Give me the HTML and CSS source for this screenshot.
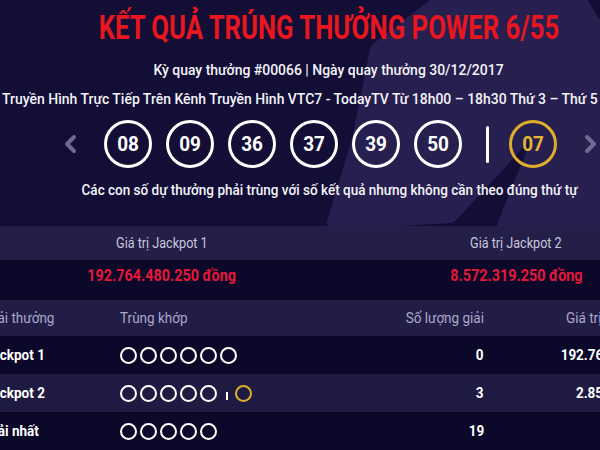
FILE: index.html
```html
<!DOCTYPE html>
<html lang="vi">
<head>
<meta charset="utf-8">
<title>Kết quả Power 6/55</title>
<link rel="stylesheet" href="styles.css">
</head>
<body>
<svg class="bg" viewBox="0 0 600 226" width="600" height="226" aria-hidden="true">
  <polygon class="bg-shape" points="443,0 578,0 600,35 600,226 505,226 555,102 450,215 335,222 360,140 378,50"/>
</svg>
<main class="page">
  <section class="hero">
    <h1 class="title line"><span class="c">KẾT QUẢ TRÚNG THƯỞNG POWER 6/55</span></h1>
    <p class="meta line"><span class="c">Kỳ quay thưởng #00066 | Ngày quay thưởng 30/12/2017</span></p>
    <p class="meta line meta-wide"><span class="c">Truyền Hình Trực Tiếp Trên Kênh Truyền Hình VTC7 - TodayTV Từ 18h00 – 18h30 Thứ 3 – Thứ 5</span></p>
    <div class="draw">
      <svg class="chev chev-left" viewBox="0 0 14 20" width="14" height="20"><polyline points="11,3 4,10 11,17"/></svg>
      <div class="balls">
        <div class="ball"><span class="c">08</span></div>
        <div class="ball"><span class="c">09</span></div>
        <div class="ball"><span class="c">36</span></div>
        <div class="ball"><span class="c">37</span></div>
        <div class="ball"><span class="c">39</span></div>
        <div class="ball"><span class="c">50</span></div>
      </div>
      <div class="sep"></div>
      <div class="ball gold"><span class="c">07</span></div>
      <svg class="chev chev-right" viewBox="0 0 14 20" width="14" height="20"><polyline points="3,3 10,10 3,17"/></svg>
    </div>
    <p class="meta line note"><span class="c">Các con số dự thưởng phải trùng với số kết quả nhưng không cần theo đúng thứ tự</span></p>
  </section>

  <section class="lower">
    <div class="jackpots">
      <div class="jp-head"><span class="c">Giá trị Jackpot 1</span></div>
      <div class="jp-head"><span class="c">Giá trị Jackpot 2</span></div>
      <div class="jp-val"><span class="c">192.764.480.250 đồng</span></div>
      <div class="jp-val"><span class="c">8.572.319.250 đồng</span></div>
    </div>

    <div class="prizes">
      <div class="ph"><span class="c">Giải thưởng</span></div>
      <div class="ph"><span class="c">Trùng khớp</span></div>
      <div class="ph right"><span class="c cr">Số lượng giải</span></div>
      <div class="ph val-head"><span class="c">Giá trị giải</span></div>

      <div class="pr"><span class="c">Jackpot 1</span></div>
      <div class="pr">
        <div class="dots"><i class="dot"></i><i class="dot"></i><i class="dot"></i><i class="dot"></i><i class="dot"></i><i class="dot"></i></div>
      </div>
      <div class="pr right"><span class="c cr">0</span></div>
      <div class="pr right"><span class="c cr">192.764.480.250</span></div>

      <div class="pr alt"><span class="c">Jackpot 2</span></div>
      <div class="pr alt">
        <div class="dots"><i class="dot"></i><i class="dot"></i><i class="dot"></i><i class="dot"></i><i class="dot"></i><i class="mini-sep"></i><i class="dot gold"></i></div>
      </div>
      <div class="pr alt right"><span class="c cr">3</span></div>
      <div class="pr alt right"><span class="c cr">2.857.439.750</span></div>

      <div class="pr"><span class="c">Giải nhất</span></div>
      <div class="pr">
        <div class="dots"><i class="dot"></i><i class="dot"></i><i class="dot"></i><i class="dot"></i><i class="dot"></i></div>
      </div>
      <div class="pr right"><span class="c cr">19</span></div>
      <div class="pr right"></div>
    </div>
  </section>
</main>
</body>
</html>
```

FILE: styles.css
```css
* {
  box-sizing: border-box;
  margin: 0;
  padding: 0;
}

html, body {
  width: 600px;
  height: 450px;
  overflow: hidden;
}

body {
  position: relative;
  background: #120e36;
  font-family: Roboto, "Noto Sans", "Liberation Sans", sans-serif;
  color: #fff;
}

.bg {
  position: absolute;
  left: 0;
  top: 0;
  display: block;
}

.bg-shape {
  fill: #261f4f;
  stroke: #261f4f;
  stroke-width: 16;
  stroke-linejoin: round;
}

.page {
  position: relative;
}

.c {
  display: inline-block;
  white-space: nowrap;
  transform: scaleX(0.9);
  transform-origin: center center;
}

.cr {
  transform-origin: right center;
}

.hero {
  padding: 7px 0 0 58px;
  height: 226px;
}

.line {
  display: flex;
  justify-content: center;
  white-space: nowrap;
}

.title {
  font-size: 34px;
  line-height: 40px;
  font-weight: 700;
  color: #e8161e;
}

.title .c {
  transform: scaleX(0.755);
}

.meta {
  font-size: 15.5px;
  line-height: 20px;
  font-weight: 500;
  margin-top: 13px;
  color: #f4f3f8;
}

.meta-wide {
  margin-top: 9px;
  margin-left: -58px;
}

.draw {
  display: flex;
  align-items: center;
  margin: 11px 0 0 5px;
  height: 48px;
}

.chev {
  display: block;
  fill: none;
  stroke: #6f6a94;
  stroke-width: 4;
  stroke-linecap: round;
  stroke-linejoin: round;
}

.chev-left {
  margin-right: 27px;
}

.chev-right {
  margin-left: 27px;
}

.balls {
  display: flex;
  gap: 14px;
}

.ball {
  width: 48px;
  height: 48px;
  border: 3px solid #fff;
  border-radius: 50%;
  display: flex;
  align-items: center;
  justify-content: center;
  font-size: 21px;
  font-weight: 700;
  color: #fff;
}

.ball.gold {
  border-color: #deaf2b;
  color: #e5b532;
}

.sep {
  width: 3px;
  height: 37px;
  background: #fff;
  border-radius: 2px;
  margin: 0 20px 0 24px;
}

.note {
  margin-top: 12px;
  font-size: 15px;
}

.lower {
  background: #0b0829;
  width: 600px;
}

.jackpots {
  display: grid;
  grid-template-columns: 324px 384px;
  width: 708px;
}

.jp-head {
  background: #241f49;
  height: 34px;
  line-height: 34px;
  font-size: 14px;
  color: #cac7db;
  text-align: center;
}

.jp-val {
  height: 32px;
  line-height: 32px;
  font-size: 16px;
  font-weight: 700;
  color: #e5183a;
  text-align: center;
}

.prizes {
  margin: 8px 0 0 -15px;
  display: grid;
  grid-template-columns: 135px 250px 114px 181px;
  width: 680px;
}

.ph {
  background: #221d46;
  height: 36px;
  display: flex;
  align-items: center;
  font-size: 15px;
  color: #aca8ca;
}

.ph .c,
.pr .c {
  transform-origin: left center;
}

.ph .cr,
.pr .cr {
  transform-origin: right center;
}

.val-head {
  padding-left: 82px;
}

.pr {
  height: 38px;
  display: flex;
  align-items: center;
  font-size: 15px;
  font-weight: 700;
  color: #fff;
}

.pr.alt {
  background: #1e1a41;
}

.right {
  justify-content: flex-end;
}

.dots {
  display: flex;
  align-items: center;
  gap: 3px;
}

.dot {
  display: block;
  width: 17px;
  height: 17px;
  border: 2.5px solid #fff;
  border-radius: 50%;
}

.dot.gold {
  border-color: #deaf2b;
}

.mini-sep {
  display: block;
  width: 2px;
  height: 8px;
  background: #fff;
  margin: 6px 4px 0 6px;
}
```
